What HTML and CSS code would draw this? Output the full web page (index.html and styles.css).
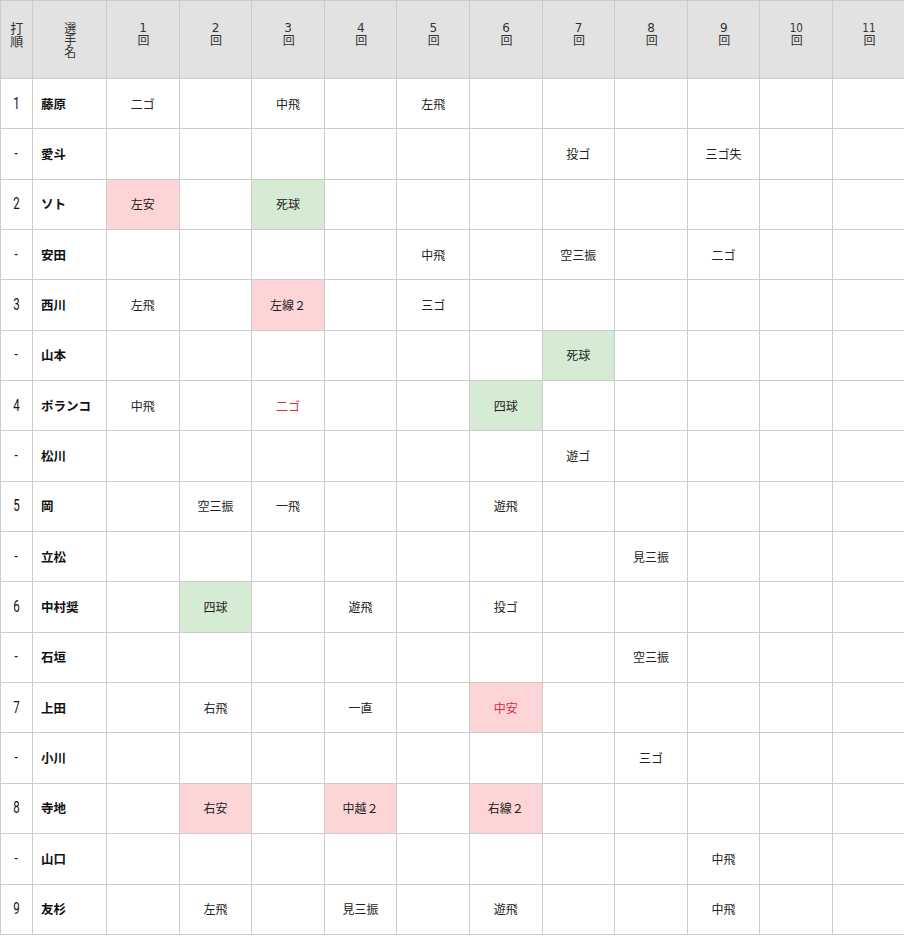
FILE: index.html
```html
<!DOCTYPE html>
<html lang="ja">
<head>
<meta charset="utf-8">
<title>打席結果</title>
<link rel="stylesheet" href="styles.css">
</head>
<body>
<table class="score">
  <colgroup>
    <col class="c-order"><col class="c-name">
    <col class="c-inn"><col class="c-inn"><col class="c-inn"><col class="c-inn"><col class="c-inn"><col class="c-inn"><col class="c-inn"><col class="c-inn"><col class="c-inn"><col class="c-inn"><col class="c-inn">
  </colgroup>
  <thead>
    <tr>
      <th><span class="vt vt-big">打順</span></th>
      <th><span class="vt">選手名</span></th>
      <th><span class="vt"><span class="tcy">1</span>回</span></th>
      <th><span class="vt"><span class="tcy">2</span>回</span></th>
      <th><span class="vt"><span class="tcy">3</span>回</span></th>
      <th><span class="vt"><span class="tcy">4</span>回</span></th>
      <th><span class="vt"><span class="tcy">5</span>回</span></th>
      <th><span class="vt"><span class="tcy">6</span>回</span></th>
      <th><span class="vt"><span class="tcy">7</span>回</span></th>
      <th><span class="vt"><span class="tcy">8</span>回</span></th>
      <th><span class="vt"><span class="tcy">9</span>回</span></th>
      <th><span class="vt"><span class="tcy">10</span>回</span></th>
      <th><span class="vt"><span class="tcy">11</span>回</span></th>
    </tr>
  </thead>
  <tbody>
    <tr><td class="ord"><span class="num">1</span></td><td class="nm">藤原</td><td>二ゴ</td><td></td><td>中飛</td><td></td><td>左飛</td><td></td><td></td><td></td><td></td><td></td><td></td></tr>
    <tr><td class="ord"><span class="num">-</span></td><td class="nm">愛斗</td><td></td><td></td><td></td><td></td><td></td><td></td><td>投ゴ</td><td></td><td>三ゴ失</td><td></td><td></td></tr>
    <tr><td class="ord"><span class="num">2</span></td><td class="nm">ソト</td><td class="hit">左安</td><td></td><td class="walk">死球</td><td></td><td></td><td></td><td></td><td></td><td></td><td></td><td></td></tr>
    <tr><td class="ord"><span class="num">-</span></td><td class="nm">安田</td><td></td><td></td><td></td><td></td><td>中飛</td><td></td><td>空三振</td><td></td><td>二ゴ</td><td></td><td></td></tr>
    <tr><td class="ord"><span class="num">3</span></td><td class="nm">西川</td><td>左飛</td><td></td><td class="hit">左線２</td><td></td><td>三ゴ</td><td></td><td></td><td></td><td></td><td></td><td></td></tr>
    <tr><td class="ord"><span class="num">-</span></td><td class="nm">山本</td><td></td><td></td><td></td><td></td><td></td><td></td><td class="walk">死球</td><td></td><td></td><td></td><td></td></tr>
    <tr><td class="ord"><span class="num">4</span></td><td class="nm">ポランコ</td><td>中飛</td><td></td><td class="rbi">二ゴ</td><td></td><td></td><td class="walk">四球</td><td></td><td></td><td></td><td></td><td></td></tr>
    <tr><td class="ord"><span class="num">-</span></td><td class="nm">松川</td><td></td><td></td><td></td><td></td><td></td><td></td><td>遊ゴ</td><td></td><td></td><td></td><td></td></tr>
    <tr><td class="ord"><span class="num">5</span></td><td class="nm">岡</td><td></td><td>空三振</td><td>一飛</td><td></td><td></td><td>遊飛</td><td></td><td></td><td></td><td></td><td></td></tr>
    <tr><td class="ord"><span class="num">-</span></td><td class="nm">立松</td><td></td><td></td><td></td><td></td><td></td><td></td><td></td><td>見三振</td><td></td><td></td><td></td></tr>
    <tr><td class="ord"><span class="num">6</span></td><td class="nm">中村奨</td><td></td><td class="walk">四球</td><td></td><td>遊飛</td><td></td><td>投ゴ</td><td></td><td></td><td></td><td></td><td></td></tr>
    <tr><td class="ord"><span class="num">-</span></td><td class="nm">石垣</td><td></td><td></td><td></td><td></td><td></td><td></td><td></td><td>空三振</td><td></td><td></td><td></td></tr>
    <tr><td class="ord"><span class="num">7</span></td><td class="nm">上田</td><td></td><td>右飛</td><td></td><td>一直</td><td></td><td class="hit rbi">中安</td><td></td><td></td><td></td><td></td><td></td></tr>
    <tr><td class="ord"><span class="num">-</span></td><td class="nm">小川</td><td></td><td></td><td></td><td></td><td></td><td></td><td></td><td>三ゴ</td><td></td><td></td><td></td></tr>
    <tr><td class="ord"><span class="num">8</span></td><td class="nm">寺地</td><td></td><td class="hit">右安</td><td></td><td class="hit">中越２</td><td></td><td class="hit">右線２</td><td></td><td></td><td></td><td></td><td></td></tr>
    <tr><td class="ord"><span class="num">-</span></td><td class="nm">山口</td><td></td><td></td><td></td><td></td><td></td><td></td><td></td><td></td><td>中飛</td><td></td><td></td></tr>
    <tr><td class="ord"><span class="num">9</span></td><td class="nm">友杉</td><td></td><td>左飛</td><td></td><td>見三振</td><td></td><td>遊飛</td><td></td><td></td><td>中飛</td><td></td><td></td></tr>
  </tbody>
</table>
</body>
</html>
```

FILE: styles.css
```css
html, body {
  margin: 0;
  padding: 0;
  background: #ffffff;
}

.score {
  width: 905px;
  border-collapse: collapse;
  table-layout: fixed;
  font-family: "Noto Sans CJK JP", "Noto Sans", sans-serif;
  font-size: 12px;
  color: #222222;
}

.c-order { width: 32px; }
.c-name { width: 74px; }
.c-inn { width: 72.6px; }

.score th,
.score td {
  border: 1px solid #cccccc;
  padding: 0;
  text-align: center;
}

.score th {
  background: #e2e2e2;
  height: 78px;
  vertical-align: top;
  padding-top: 21px;
  font-weight: normal;
  color: #333333;
  box-sizing: border-box;
  line-height: 1;
}

.vt {
  display: inline-block;
  writing-mode: vertical-rl;
  text-orientation: upright;
  font-size: 12px;
  line-height: 1.2;
}

.vt-big {
  font-size: 13px;
}

.tcy {
  text-combine-upright: all;
  font-family: "DejaVu Sans", sans-serif;
}

.score td {
  height: 49.35px;
  vertical-align: middle;
  line-height: 14px;
}

.score .ord {
  font-family: "Roboto", "Liberation Sans", sans-serif;
  font-size: 16px;
  color: #111111;
}

.num {
  display: inline-block;
  transform: scaleX(0.72);
}

.score .nm {
  text-align: left;
  padding-left: 8px;
  font-weight: bold;
  font-size: 12.5px;
  color: #111111;
}

.score .hit {
  background: #fdd5d7;
}

.score .walk {
  background: #d5ebd3;
}

.score .rbi {
  color: #d22f3c;
}
```
